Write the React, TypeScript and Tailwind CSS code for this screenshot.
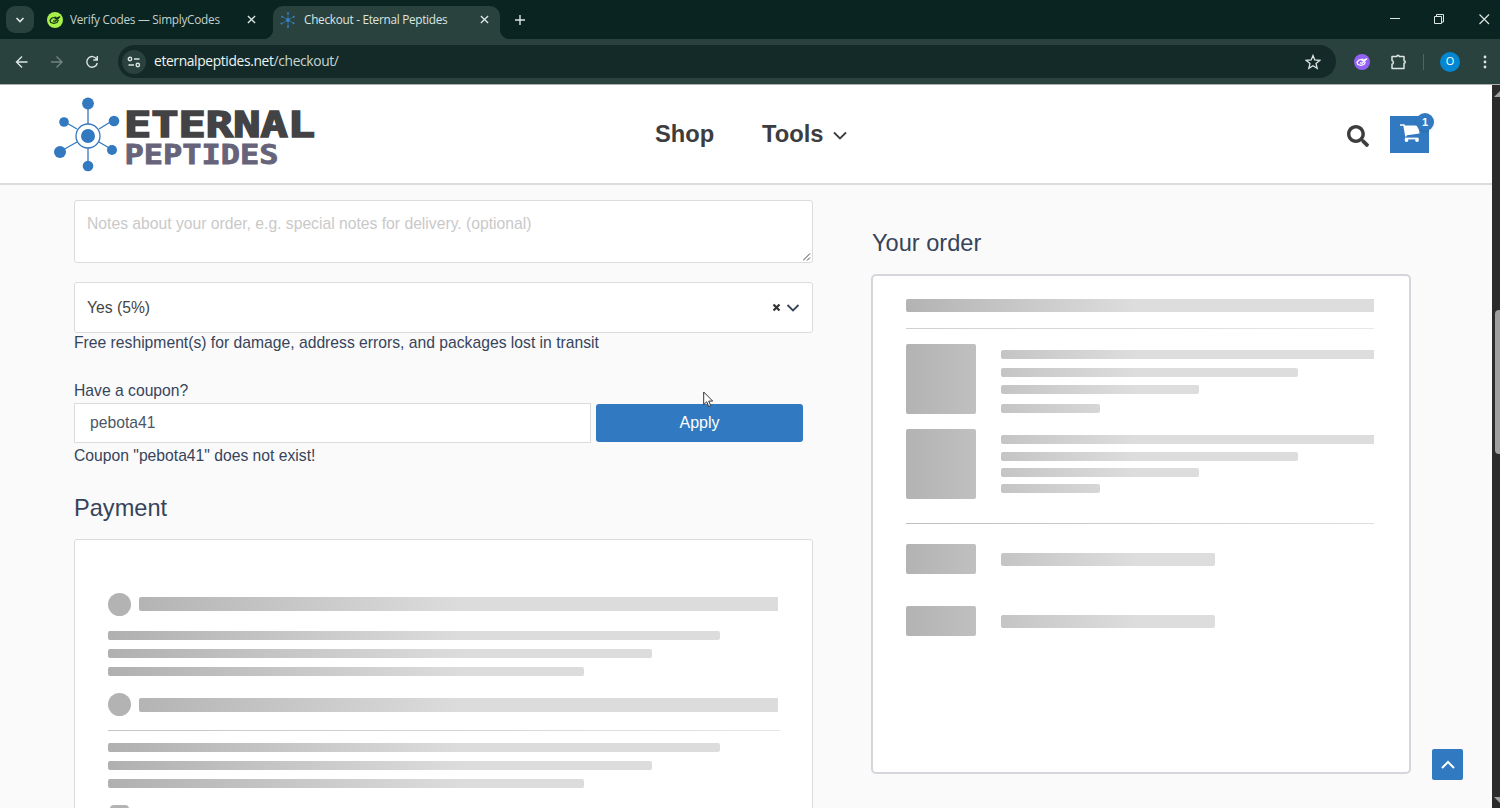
import clsx from "clsx";
import { FaSearch } from "react-icons/fa";

const leftBar =
  "bg-fixed bg-[linear-gradient(90deg,#b0b0b0_108px,#dcdcdc_460px)]";
const rightBar =
  "bg-fixed bg-[linear-gradient(90deg,#b3b3b3_906px,#dddddd_1135px)]";

function CodesIcon({ className }: { className: string }) {
  return (
    <svg viewBox="0 0 16 16" className={className} fill="none">
      <circle cx="8" cy="8" r="8" fill="currentColor" />
      <g className="stroke-(--mark)" strokeWidth="1.2" strokeLinejoin="round">
        <path d="M9.2 5.1 5 6 3 8.2l.8 2.3 3 .8 3.2-.8 1.4-2.6" />
        <path d="m6 8.9 2.2.3 4.6-4.4-3.2 1.3L7.6 7" />
      </g>
    </svg>
  );
}

function Close({ className }: { className: string }) {
  return (
    <svg viewBox="0 0 10 10" className={className} stroke="currentColor">
      <path d="m1 1 8 8M9 1 1 9" strokeWidth="1.5" />
    </svg>
  );
}

function TabStrip() {
  return (
    <div className="flex h-[39px] bg-[#0a2421] text-[#dbe5e1]">
      <button className="mt-1.5 ml-1.5 flex h-[27px] w-7 items-center justify-center rounded-[9px] bg-[#2a423d]">
        <svg viewBox="0 0 10 10" className="size-2.5" fill="none">
          <path d="m1.5 3 3.5 3.5L8.5 3" stroke="currentColor" strokeWidth="1.7" />
        </svg>
      </button>
      <div className="flex w-[239px] items-center pl-[13px]">
        <CodesIcon className="size-4 text-[#a8f04a] [--mark:#14301c]" />
        <span className="ml-[7px] w-[177px] pt-px text-[11.8px] tracking-[-0.27px] whitespace-nowrap text-[#c3d0cc]">
          Verify Codes — SimplyCodes
        </span>
        <Close className="size-[9px]" />
      </div>
      <div className="relative mt-1.5 flex h-[33px] w-[227px] items-center rounded-t-[10px] bg-[#2a423d] pb-1.5 pl-[7px]">
        <span className="absolute bottom-0 -left-2.5 size-2.5 bg-[radial-gradient(circle_at_0_0,#0a2421_10px,#2a423d_10.5px)]" />
        <span className="absolute -right-2.5 bottom-0 size-2.5 bg-[radial-gradient(circle_at_100%_0,#0a2421_10px,#2a423d_10.5px)]" />
        <svg viewBox="0 0 16 16" className="size-4 text-[#3584cb]">
          <path
            d="M8 2v12M2.8 5l10.4 6M13.2 5 2.8 11"
            stroke="currentColor"
            strokeWidth=".6"
          />
          <g fill="currentColor">
            <circle cx="8" cy="8" r="1.9" />
            <circle cx="8" cy="1.3" r="1.1" />
            <circle cx="8" cy="14.7" r="1.1" />
            <circle cx="2.2" cy="4.7" r="1" />
            <circle cx="13.8" cy="4.7" r="1" />
            <circle cx="1.6" cy="11.5" r="1.1" />
            <circle cx="13.5" cy="11.3" r="1" />
          </g>
        </svg>
        <span className="ml-2 w-[176px] pt-px text-[11.8px] tracking-[-0.29px] whitespace-nowrap">
          Checkout - Eternal Peptides
        </span>
        <Close className="size-[9px]" />
      </div>
      <svg viewBox="0 0 10 10" className="mt-[15px] ml-[15px] size-2.5">
        <path d="M5 0v10M0 5h10" stroke="currentColor" strokeWidth="1.4" />
      </svg>
      <div className="ml-auto flex items-start pr-2.5">
        <svg viewBox="0 0 100 12" className="mt-[13px] h-3 w-[100px]" fill="none" stroke="currentColor">
          <path d="M0 5.5h10" />
          <path d="M44.5 3.5h7v7h-7zM46.5 3V1.5h7v7.5H52" />
          <path d="m89.5 1.5 9.5 9.5M99 1.5 89.5 11" strokeWidth="1.2" />
        </svg>
      </div>
    </div>
  );
}

function Toolbar() {
  return (
    <div className="flex h-[46px] items-center border-b border-[#a9b0ae] bg-[#2a423d] text-[#dbe5e1]">
      <svg viewBox="0 0 100 16" className="ml-[15px] h-4 w-[100px] shrink-0" fill="none" stroke="currentColor" strokeWidth="1.4">
        <path d="M12.5 8H1.5M7 2.5 1.5 8 7 13.5" />
        <path d="M36 8h11M41.5 2.5 47 8l-5.500 5.500" opacity=".4" />
        <path d="M81.7 5.2a5.300 5.300 0 1 0 .6 3.800M82.300 2v4h-4" />
      </svg>
      <div className="ml-[3px] flex h-[33px] w-[1218px] items-center rounded-full bg-[#132a28] pr-[15px] pl-1">
        <span className="flex size-6 items-center justify-center rounded-full bg-[#2a423d]">
          <svg viewBox="0 0 14 12" className="h-3 w-3.5" fill="none" stroke="currentColor" strokeWidth="1.4">
            <circle cx="3" cy="3" r="1.7" />
            <path d="M7 3h5.500M1.500 9H7" />
            <circle cx="10.8" cy="9" r="1.7" />
          </svg>
        </span>
        <span className="ml-2 text-[13.8px] tracking-[-0.35px] text-[#c9d6d2]">
          <span className="text-[#eef5f2]">eternalpeptides.net</span>/checkout/
        </span>
        <svg viewBox="0 0 16 16" className="ml-auto size-4" fill="none">
          <path
            d="m8 1.500 1.800 4.500 4.900.4-3.700 3.100 1.200 4.800L8 11.700l-4.200 2.600L5 9.500 1.300 6.400 6.200 6z"
            stroke="currentColor"
            strokeWidth="1.3"
          />
        </svg>
      </div>
      <CodesIcon className="ml-[18px] size-4 text-[#9461f5] [--mark:#ffffff]" />
      <svg viewBox="0 0 18 18" className="ml-5 size-[18px]" fill="none">
        <path
          d="M2 3.500h4.800a1.200 1.200 0 0 1 2.400 0h4.800v4.300a1.200 1.200 0 0 1 0 2.400v5.300H2v-4.200a2 2 0 0 0 0-3.800z"
          stroke="currentColor"
          strokeWidth="1.5"
          strokeLinejoin="round"
        />
      </svg>
      <span className="ml-[15px] h-4 w-px bg-[#50665f]" />
      <span className="ml-4 flex size-5 items-center justify-center rounded-full bg-[#0387d2] text-[11px] text-white">
        O
      </span>
      <svg viewBox="0 0 4 16" className="ml-[23px] h-4 w-1" fill="currentColor">
        <circle cx="2" cy="3" r="1.4" />
        <circle cx="2" cy="8" r="1.4" />
        <circle cx="2" cy="13" r="1.4" />
      </svg>
    </div>
  );
}

function Logo() {
  return (
    <svg viewBox="0 0 262 76" className="ml-[54px] h-[76px] w-[262px] shrink-0">
      <g stroke="#3579bd" strokeWidth="1.3" fill="none">
        <path d="M34 9v19M34 52v17M11 26l12 7M45 33l13-8M23 46 7 55M45 46l12 7" />
        <circle cx="34" cy="40" r="12" />
      </g>
      <g fill="#3279c0">
        <circle cx="34" cy="40" r="7" />
        <circle cx="34" cy="7.5" r="5.900" />
        <circle cx="34" cy="70" r="5.300" />
        <circle cx="10" cy="26" r="4.800" />
        <circle cx="60" cy="25" r="5.300" />
        <circle cx="6" cy="56" r="6" />
        <circle cx="58" cy="54" r="5" />
      </g>
      <g fontFamily="DejaVu Sans Mono, monospace" fontWeight="bold">
        <text x="70" y="40.5" fontSize="35" fill="#434345" stroke="#434345" strokeWidth="1.6" textLength="191" lengthAdjust="spacingAndGlyphs">
          ETERNAL
        </text>
        <text x="70.5" y="67.5" fontSize="26" fill="#66637a" stroke="#66637a" strokeWidth=".8" textLength="154" lengthAdjust="spacingAndGlyphs">
          PEPTIDES
        </text>
      </g>
    </svg>
  );
}

function Header() {
  return (
    <header className="flex h-[100px] shrink-0 items-center border-b-2 border-[#dcdcde] bg-white text-[#3d3d40]">
      <Logo />
      <nav className="mt-px ml-[339px] flex w-[692px] items-center text-[23.7px] leading-none font-bold">
        <a className="w-[107px]">Shop</a>
        <a>Tools</a>
        <svg viewBox="0 0 14 10" className="mt-1 ml-2.5 h-2.5 w-3.5" fill="none">
          <path d="m1 1.500 6 6 6-6" stroke="currentColor" strokeWidth="1.8" />
        </svg>
      </nav>
      <FaSearch className="mt-[3px] size-[22px]" />
      <div className="relative mt-px ml-[21px] flex h-[37px] w-[39px] justify-center bg-[#317ac1] pt-[7px] text-white">
        <svg viewBox="0 0 22 20" className="h-5 w-[22px]" fill="none" stroke="white">
          <path d="M1 2h4l2 11.500" strokeWidth="1.5" />
          <path d="M5.500 2.500h12q3 3 3 8l-14 2z" fill="white" stroke="none" />
          <path d="M6 15.500h13.500" strokeWidth="1.8" />
          <g fill="white" stroke="none">
            <circle cx="7.500" cy="17" r="1.900" />
            <circle cx="18" cy="17" r="1.900" />
          </g>
        </svg>
        <span className="absolute -top-[3px] -right-[5px] flex size-[18px] items-center justify-center rounded-full bg-[#317ac1] text-[11px] font-bold shadow">
          1
        </span>
      </div>
    </header>
  );
}

function PaymentLines({ gap }: { gap: string }) {
  return (
    <div className={clsx("flex flex-col gap-[9px]", gap)}>
      <div className={clsx("h-[9px] w-[612px] rounded-xs", leftBar)} />
      <div className={clsx("h-[9px] w-[544px] rounded-xs", leftBar)} />
      <div className={clsx("h-[9px] w-[476px] rounded-xs", leftBar)} />
    </div>
  );
}

function PaymentTitle({ barGap }: { barGap: string }) {
  return (
    <div className="flex h-[23px] gap-2">
      <div className="size-[23px] rounded-full bg-[#b3b3b3]" />
      <div className={clsx("h-3.5 w-[639px] rounded-l-xs", barGap, leftBar)} />
    </div>
  );
}

function ProductLines({ gaps }: { gaps: string[] }) {
  const widths = ["w-[373px]", "w-[297px]", "w-[198px]", "w-[99px]"];
  return (
    <div className="flex gap-[25px]">
      <div className={clsx("h-[70px] w-[70px] rounded-xs", rightBar)} />
      <div>
        {widths.map((width, index) => (
          <div
            key={index}
            className={clsx(
              "h-[9px]",
              index === 0 ? "rounded-l-xs" : "rounded-xs",
              width,
              gaps[index],
              rightBar
            )}
          />
        ))}
      </div>
    </div>
  );
}

function TotalLine() {
  return (
    <div className="flex items-center gap-[25px]">
      <div className={clsx("h-[30px] w-[70px] rounded-xs", rightBar)} />
      <div className={clsx("h-[13px] w-[214px] rounded-xs", rightBar)} />
    </div>
  );
}

export default function App() {
  return (
    <div className="flex h-[808px] w-[1500px] flex-col overflow-hidden font-['Open_Sans',sans-serif]">
      <TabStrip />
      <Toolbar />
      <div className="flex min-h-0 flex-1 font-['Liberation_Sans',sans-serif]">
        <div className="relative flex w-[1492px] flex-col bg-[#fafafa] text-[#36445a]">
          <Header />
          <main className="flex min-h-0 flex-1 text-[15.7px]">
            <section className="ml-[74px] flex w-[739px] flex-col pt-[15px]">
              <div className="relative h-[63px] shrink-0 rounded-[3px] border border-[#dcdce0] bg-white px-3 pt-3 leading-[22px] text-[#c9c9c9]">
                Notes about your order, e.g. special notes for delivery. (optional)
                <svg viewBox="0 0 8 8" className="absolute right-px bottom-px size-2">
                  <path d="m0 7.500 7-7M4 7.500l3-3" stroke="#444" />
                </svg>
              </div>
              <div className="mt-[19px] flex h-[51px] shrink-0 items-center rounded-[3px] border border-[#dcdce0] bg-white px-3 text-[#444]">
                Yes (5%)
                <svg viewBox="0 0 28 10" className="ml-auto h-2.5 w-7" fill="none">
                  <path d="m1.500 1.500 6 6M7.500 1.500l-6 6" stroke="#333" strokeWidth="2.2" />
                  <path d="m15.500 2 5.500 5.500L26.500 2" stroke="#36445a" strokeWidth="1.8" />
                </svg>
              </div>
              <p className="leading-[19px]">
                Free reshipment(s) for damage, address errors, and packages lost in transit
              </p>
              <p className="mt-[29px] leading-[20px]">Have a coupon?</p>
              <div className="mt-[2px] flex h-10 shrink-0 items-center gap-[5px]">
                <div className="flex h-10 w-[517px] items-center border border-[#dcdce0] bg-white pl-[15px] text-[#4b5768]">
                  pebota41
                </div>
                <button className="h-[38px] w-[207px] rounded-[3px] bg-[#317ac1] text-[16px] text-white">
                  Apply
                </button>
              </div>
              <p className="mt-[3px] leading-[20px]">
                Coupon "pebota41" does not exist!
              </p>
              <h2 className="mt-7 text-[23.6px] leading-[28px]">Payment</h2>
              <div className="mt-[17px] h-[300px] shrink-0 rounded-[3px] border border-[#dcdce0] bg-white pt-[53px] pl-[33px]">
                <PaymentTitle barGap="mt-1" />
                <PaymentLines gap="mt-[15px]" />
                <div className="mt-[17px]">
                  <PaymentTitle barGap="mt-[5px]" />
                </div>
                <div className="mt-[14px] h-px w-[672px] bg-linear-to-r from-[#c4c4c4] to-[#e6e6e6]" />
                <PaymentLines gap="mt-3" />
                <div className="mt-[17px] ml-0.5 h-3 w-[19px] rounded-t bg-[#b3b3b3]" />
              </div>
            </section>
            <section className="ml-[58px] w-[540px] pt-[44px]">
              <h2 className="ml-px text-[23.6px] leading-[28px]">Your order</h2>
              <div className="mt-[17px] h-[500px] rounded-[5px] border-2 border-[#d5d6dc] bg-white pt-[23px] pl-[33px]">
                <div className={clsx("h-[13px] w-[468px] rounded-l-xs", rightBar)} />
                <div className="mt-4 mb-[15px] h-px w-[468px] bg-linear-to-r from-[#d0d0d0] to-[#e8e8e8]" />
                <ProductLines gaps={["mt-[6px]", "mt-[9px]", "mt-2", "mt-[10px]"]} />
                <div className="h-[15px]" />
                <ProductLines gaps={["mt-[6px]", "mt-2", "mt-[7px]", "mt-[7px]"]} />
                <div className="mt-6 mb-5 h-px w-[468px] bg-linear-to-r from-[#bebebe] to-[#dedede]" />
                <TotalLine />
                <div className="h-8" />
                <TotalLine />
              </div>
            </section>
          </main>
          <button className="absolute right-[29px] bottom-7 flex size-[31px] items-center justify-center rounded-xs bg-[#317ac1]">
            <svg viewBox="0 0 14 10" className="h-2.5 w-3.5" fill="none">
              <path d="m1 8 6-6 6 6" stroke="white" strokeWidth="2" />
            </svg>
          </button>
          <svg viewBox="0 0 12 17" className="absolute top-[306px] left-[703px] h-[17px] w-3">
            <path
              d="M.7 1v12.500l3-2.700 2 4.700 2-.9-2-4.500h4z"
              fill="white"
              stroke="#333"
            />
          </svg>
        </div>
        <div className="flex w-2 flex-col items-end justify-between overflow-hidden bg-[#2b2b2b]">
          <svg viewBox="0 0 6 6" className="mt-[6px] size-[6px]">
            <path d="M0 6 6 0v6z" fill="#a0a0a0" />
          </svg>
          <div className="mt-[213px] mb-auto h-[144px] w-[5px] rounded-l-[4px] bg-[#9f9f9f]" />
          <svg viewBox="0 0 6 6" className="mb-[5px] size-[6px]">
            <path d="M0 0h6v6z" fill="#a0a0a0" />
          </svg>
        </div>
      </div>
    </div>
  );
}
